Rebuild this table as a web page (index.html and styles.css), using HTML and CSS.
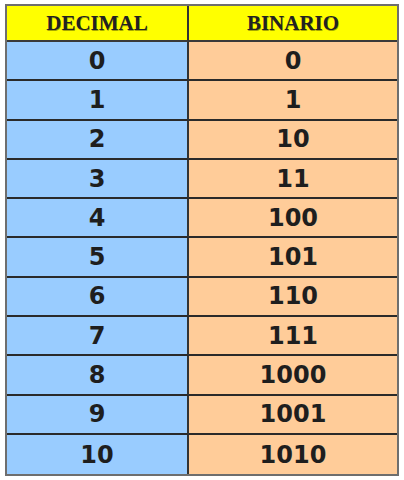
FILE: index.html
```html
<!DOCTYPE html>
<html>
<head>
<meta charset="utf-8">
<link rel="stylesheet" href="styles.css">
</head>
<body>
<div class="table">
  <div class="cell head left">DECIMAL</div>
  <div class="cell head">BINARIO</div>
  <div class="cell dec">0</div><div class="cell bin">0</div>
  <div class="cell dec">1</div><div class="cell bin">1</div>
  <div class="cell dec">2</div><div class="cell bin">10</div>
  <div class="cell dec">3</div><div class="cell bin">11</div>
  <div class="cell dec">4</div><div class="cell bin">100</div>
  <div class="cell dec">5</div><div class="cell bin">101</div>
  <div class="cell dec">6</div><div class="cell bin">110</div>
  <div class="cell dec">7</div><div class="cell bin">111</div>
  <div class="cell dec">8</div><div class="cell bin">1000</div>
  <div class="cell dec">9</div><div class="cell bin">1001</div>
  <div class="cell dec last">10</div><div class="cell bin last">1010</div>
</div>
</body>
</html>
```
FILE: styles.css
```css
html, body {
  margin: 0;
  background: #ffffff;
}
body {
  padding: 4px 0 0 5px;
}
.table {
  width: 390px;
  border: 2px solid #6e6e6e;
  display: grid;
  grid-template-columns: 182px 1fr;
  grid-template-rows: 36px repeat(11, 39.3px);
}
.cell {
  display: flex;
  align-items: center;
  justify-content: center;
  border-bottom: 2px solid #2a2a2a;
  font-family: "DejaVu Sans", sans-serif;
  font-weight: bold;
  font-size: 24px;
  color: #1e1e1e;
}
.cell.last {
  border-bottom: none;
}
.head {
  background: #ffff00;
  font-family: "Liberation Serif", serif;
  font-size: 21px;
  color: #222222;
  text-shadow: 0.5px 0.5px 0 rgba(0, 0, 0, 0.35);
  border-bottom-color: #3a3a3a;
}
.left, .dec {
  border-right: 2px solid #333333;
}
.dec {
  background: #99ccff;
}
.bin {
  background: #ffcc99;
}
```
